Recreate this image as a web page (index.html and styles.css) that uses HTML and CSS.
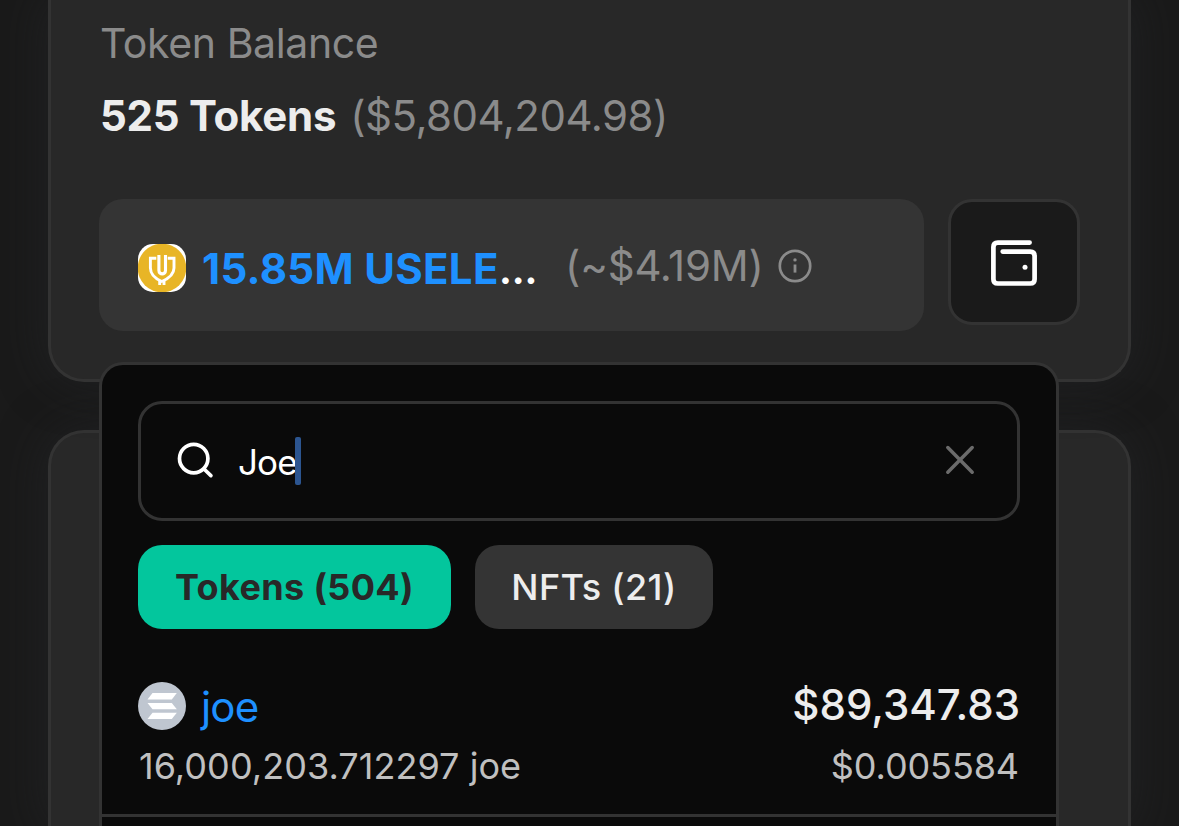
FILE: index.html
```
<!DOCTYPE html>
<html lang="en">
<head>
<meta charset="utf-8">
<title>Token Balance</title>
<link rel="stylesheet" href="styles.css">
</head>
<body>
<main class="page">
  <section class="card card-balance">
    <div class="label">Token Balance</div>
    <div class="summary"><strong class="count">525 Tokens</strong><span class="total">($5,804,204.98)</span></div>
    <div class="holding-row">
      <div class="holding">
        <svg class="coin" viewBox="0 0 48 48">
          <rect width="48" height="48" rx="15" fill="#fff"/>
          <clipPath id="coin-clip"><rect width="48" height="48" rx="15"/></clipPath>
          <circle cx="24" cy="24" r="24.3" fill="#e8b526" clip-path="url(#coin-clip)"/>
          <g fill="none" stroke="#fff" stroke-width="2.9">
            <path d="M18.3 14.3H12.4V24C12.4 31 17 34.5 23.8 37.5C30.6 34.5 36 31 36 24V14.3H29.7"/>
            <path d="M20.9 11V26.5C20.9 31 27.5 31 27.5 26.5V11" stroke-width="3.1"/>
            <path d="M21.7 36V41M26 36V41"/>
          </g>
        </svg>
        <span class="amount">15.85M USELE</span><span class="dots">...</span>
        <span class="approx">(~$4.19M)</span>
        <svg class="info" viewBox="0 0 34 34" fill="none" stroke="#8b8b8b">
          <circle cx="17" cy="17" r="15.2" stroke-width="2.7"/>
          <path d="M17 15.5V23.6" stroke-width="2.8"/>
          <circle cx="17" cy="10.9" r="1.7" fill="#8b8b8b" stroke="none"/>
        </svg>
      </div>
      <button class="wallet" aria-label="Wallet">
        <svg class="wallet-icon" viewBox="0 0 48 48" fill="none" stroke="#fff" stroke-width="4.7" stroke-linecap="round" stroke-linejoin="round">
          <path d="M39.6 4.6H7.8Q3.4 4.6 3.4 9V41.2Q3.4 45.5 7.8 45.5H40.2Q44.6 45.5 44.6 41.2V18Q44.6 13.6 40.2 13.6H12.7"/>
          <circle cx="35" cy="29.3" r="2.5" fill="#fff" stroke="none"/>
        </svg>
      </button>
      <div class="dropdown">
        <div class="search">
          <svg class="search-icon" viewBox="0 0 40 40" fill="none" stroke="#fff" stroke-width="3.7" stroke-linecap="round">
            <circle cx="18.7" cy="17.6" r="14.2"/>
            <path d="M29 28L35.9 34.6"/>
          </svg>
          <span class="query">Joe</span><span class="caret"></span>
          <svg class="clear" viewBox="0 0 32 32" fill="none" stroke="#6b6b6b" stroke-width="3.5" stroke-linecap="round">
            <path d="M3.8 3.6L28.2 28.2M28.2 3.6L3.8 28.2"/>
          </svg>
        </div>
        <div class="tabs">
          <button class="tab tab-active">Tokens (504)</button>
          <button class="tab tab-nft">NFTs (21)</button>
        </div>
        <div class="token">
          <div class="token-line">
            <div class="token-name">
              <svg class="coin" viewBox="0 0 48 48">
                <circle cx="24" cy="24" r="24" fill="#bfc6d0"/>
                <g fill="#fff">
                  <path d="M14.5 11H38.8L33.8 17.5H9.5Z"/>
                  <path d="M9.5 20.9H33.8L38.8 27.3H14.5Z"/>
                  <path d="M14.5 30.7H38.8L33.8 37H9.5Z"/>
                </g>
              </svg>
              <a class="symbol">joe</a>
            </div>
            <span class="value">$89,347.83</span>
          </div>
          <div class="token-line token-detail">
            <span class="quantity">16,000,203.712297 joe</span>
            <span class="price">$0.005584</span>
          </div>
        </div>
      </div>
    </div>
  </section>
  <section class="card card-next"></section>
</main>
</body>
</html>
```
FILE: styles.css
```
* { box-sizing: border-box; }
body {
  margin: 0;
  height: 826px;
  overflow: hidden;
  background: #1a1a1a;
  color: #ededed;
  font-family: Inter, "Liberation Sans", sans-serif;
  font-size: 42px;
}
svg { display: block; flex: none; }
button { font: inherit; border: 0; margin: 0; padding: 0; }
.page {
  width: 1083px;
  height: 826px;
  margin-left: 48px;
  display: flex;
  flex-direction: column;
  gap: 48px;
}
.card {
  background: #282828;
  border: 3px solid #333;
  border-radius: 36px;
  box-shadow: 0 0 48px rgba(40, 41, 45, 0.5);
}
.card-balance {
  flex: none;
  height: 382px;
  padding: 10px 48px 48px;
  border-top: 0;
  border-radius: 0 0 36px 36px;
  position: relative;
  z-index: 1;
}
.card-next {
  flex: 1;
  border-bottom: 0;
  border-radius: 36px 36px 0 0;
}
.label {
  padding-left: 1px;
  font-size: 41px;
  line-height: 67px;
  letter-spacing: -0.4px;
  color: #8b8b8b;
}
.summary {
  padding-left: 1px;
  margin-top: 5px;
  line-height: 67px;
  display: flex;
  gap: 14px;
}
.count { font-weight: 700; letter-spacing: -0.25px; }
.total { color: #8b8b8b; letter-spacing: -0.5px; }
.holding-row {
  position: relative;
  margin-top: 50px;
  display: flex;
  align-items: flex-start;
  gap: 24px;
}
.holding {
  width: 825px;
  height: 132px;
  padding: 6px 39px 0;
  display: flex;
  align-items: center;
  background: #343434;
  border-radius: 24px;
}
.coin { width: 48px; height: 48px; }
.amount {
  margin-left: 16px;
  font-weight: 650;
  letter-spacing: 0.3px;
  color: #1e90ff;
}
.dots { color: #fff; font-weight: 600; letter-spacing: -0.6px; }
.approx {
  margin: 0 15px 6px 28px;
  color: #8b8b8b;
  letter-spacing: -0.25px;
}
.info { width: 34px; height: 34px; margin-bottom: 4px; }
.wallet {
  width: 132px;
  height: 126px;
  display: grid;
  place-items: center;
  background: #1a1a1a;
  border: 3px solid #333;
  border-radius: 24px;
}
.wallet-icon { width: 48px; height: 48px; }
.dropdown {
  position: absolute;
  top: 163px;
  left: 0;
  width: 960px;
  height: 464px;
  padding-top: 36px;
  background: #0a0a0a;
  border: 3px solid #333;
  border-bottom: 0;
  border-radius: 24px 24px 0 0;
}
.search {
  height: 120px;
  margin: 0 36px;
  padding: 0 41px 0 34px;
  display: flex;
  align-items: center;
  border: 3px solid #333;
  border-radius: 24px;
}
.search-icon { width: 40px; height: 40px; }
.query {
  margin: 2px 0 0 23px;
  font-size: 35px;
  letter-spacing: -0.9px;
  color: #fff;
}
.caret {
  width: 6px;
  height: 48px;
  margin-left: -2px;
  border-radius: 2px;
  background: #2c5590;
}
.clear { width: 32px; height: 32px; margin: 0 0 2px auto; }
.tabs {
  margin: 24px 36px 0;
  display: flex;
  gap: 24px;
}
.tab {
  height: 84px;
  padding-bottom: 1px;
  border-radius: 24px;
  font-size: 36px;
  letter-spacing: 0.35px;
}
.tab-active {
  width: 313px;
  background: #03c69d;
  color: #282828;
  font-weight: 650;
}
.tab-nft {
  width: 238px;
  background: #343434;
  color: #ededed;
  font-weight: 450;
}
.token {
  margin-top: 44px;
  padding: 0 36px 21px;
  border-bottom: 3px solid #333;
}
.token-line {
  height: 66px;
  display: flex;
  justify-content: space-between;
  align-items: center;
}
.token-name { display: flex; align-items: center; gap: 15px; }
.symbol { color: #1e90ff; letter-spacing: -0.8px; }
.value { margin-bottom: 4px; font-weight: 500; letter-spacing: 0; }
.token-detail {
  height: 54px;
  padding: 0 1px 1px;
  font-size: 36px;
  color: #c0c0c0;
}
.quantity { letter-spacing: 0.05px; }
.price { letter-spacing: -0.1px; }
```
